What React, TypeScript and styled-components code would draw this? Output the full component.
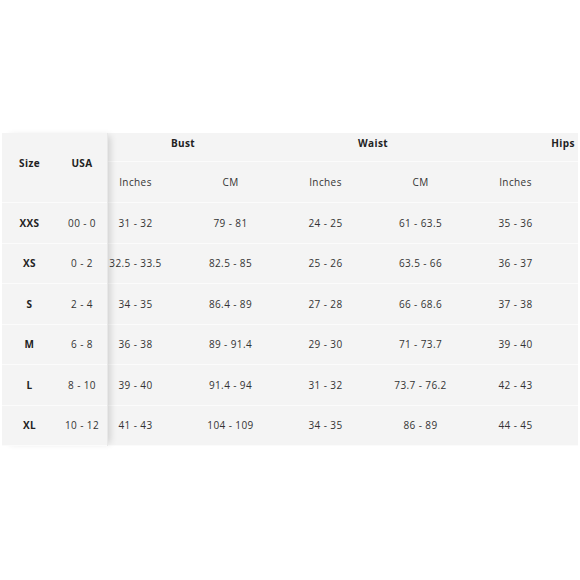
import styled, { createGlobalStyle } from "styled-components";

const GlobalStyle = createGlobalStyle`
  body {
    margin: 0;
    background: #ffffff;
    font-family: "Open Sans", "Liberation Sans", sans-serif;
  }
`;

type Row = {
  size: string;
  usa: string;
  values: string[];
};

const rows: Row[] = [
  { size: "XXS", usa: "00 - 0", values: ["31 - 32", "79 - 81", "24 - 25", "61 - 63.5", "35 - 36"] },
  { size: "XS", usa: "0 - 2", values: ["32.5 - 33.5", "82.5 - 85", "25 - 26", "63.5 - 66", "36 - 37"] },
  { size: "S", usa: "2 - 4", values: ["34 - 35", "86.4 - 89", "27 - 28", "66 - 68.6", "37 - 38"] },
  { size: "M", usa: "6 - 8", values: ["36 - 38", "89 - 91.4", "29 - 30", "71 - 73.7", "39 - 40"] },
  { size: "L", usa: "8 - 10", values: ["39 - 40", "91.4 - 94", "31 - 32", "73.7 - 76.2", "42 - 43"] },
  { size: "XL", usa: "10 - 12", values: ["41 - 43", "104 - 109", "34 - 35", "86 - 89", "44 - 45"] },
];

const units = ["Inches", "CM", "Inches", "CM", "Inches"];
const groups = ["Bust", "Waist", "Hips"];

export default function App() {
  return (
    <>
      <GlobalStyle />
      <Page>
        <Table>
          <Frozen>
            <FrozenHead>
              <HeadLabel>Size</HeadLabel>
              <HeadLabel>USA</HeadLabel>
            </FrozenHead>
            {rows.map((r) => (
              <FrozenRow key={r.size}>
                <SizeCell>{r.size}</SizeCell>
                <Cell>{r.usa}</Cell>
              </FrozenRow>
            ))}
          </Frozen>
          <Scroller>
            <Track>
              <GroupRow>
                {groups.map((g) => (
                  <GroupCell key={g}>{g}</GroupCell>
                ))}
              </GroupRow>
              <UnitRow>
                {units.map((u, i) => (
                  <Cell key={i}>{u}</Cell>
                ))}
              </UnitRow>
              {rows.map((r) => (
                <DataRow key={r.size}>
                  {r.values.map((v, i) => (
                    <Cell key={i}>{v}</Cell>
                  ))}
                </DataRow>
              ))}
            </Track>
          </Scroller>
        </Table>
      </Page>
    </>
  );
}

const Page = styled.div`
  width: 580px;
  height: 580px;
  padding-top: 133px;
  box-sizing: border-box;
`;

const Table = styled.div`
  display: flex;
  margin-left: 2px;
  width: 576px;
  height: 313px;
  background: #f4f4f4;
  color: #333;
  font-size: 10px;
  letter-spacing: 0.4px;
`;

const Frozen = styled.div`
  position: relative;
  z-index: 2;
  width: 105px;
  flex-shrink: 0;
  background: #f4f4f4;
  border-right: 1px solid #e8e8e8;
  box-shadow: 5px 0 7px -3px rgba(0, 0, 0, 0.16);
`;

const FrozenHead = styled.div`
  display: grid;
  grid-template-columns: 55px 50px;
  align-items: center;
  height: 70px;
  padding-bottom: 10px;
  border-bottom: 1px solid #fbfbfb;
  box-sizing: border-box;
`;

const HeadLabel = styled.div`
  text-align: center;
  font-weight: 700;
  color: #222;
`;

const FrozenRow = styled.div`
  display: grid;
  grid-template-columns: 55px 50px;
  align-items: center;
  height: 40.5px;
  border-bottom: 1px solid #fbfbfb;
  box-sizing: border-box;
`;

const Cell = styled.div`
  text-align: center;
  white-space: nowrap;
`;

const SizeCell = styled(Cell)`
  font-weight: 700;
  color: #222;
`;

const Scroller = styled.div`
  flex: 1;
  overflow: hidden;
`;

const Track = styled.div`
  margin-left: -20px;
  width: 570px;
`;

const GroupRow = styled.div`
  display: grid;
  grid-template-columns: repeat(3, 190px);
  height: 29px;
  border-bottom: 1px solid #fbfbfb;
  box-sizing: border-box;
`;

const GroupCell = styled.div`
  text-align: center;
  font-weight: 700;
  color: #222;
  padding-top: 3px;
`;

const UnitRow = styled.div`
  display: grid;
  grid-template-columns: repeat(5, 95px);
  align-items: center;
  height: 41px;
  border-bottom: 1px solid #fbfbfb;
  box-sizing: border-box;
`;

const DataRow = styled.div`
  display: grid;
  grid-template-columns: repeat(5, 95px);
  align-items: center;
  height: 40.5px;
  border-bottom: 1px solid #fbfbfb;
  box-sizing: border-box;
`;
